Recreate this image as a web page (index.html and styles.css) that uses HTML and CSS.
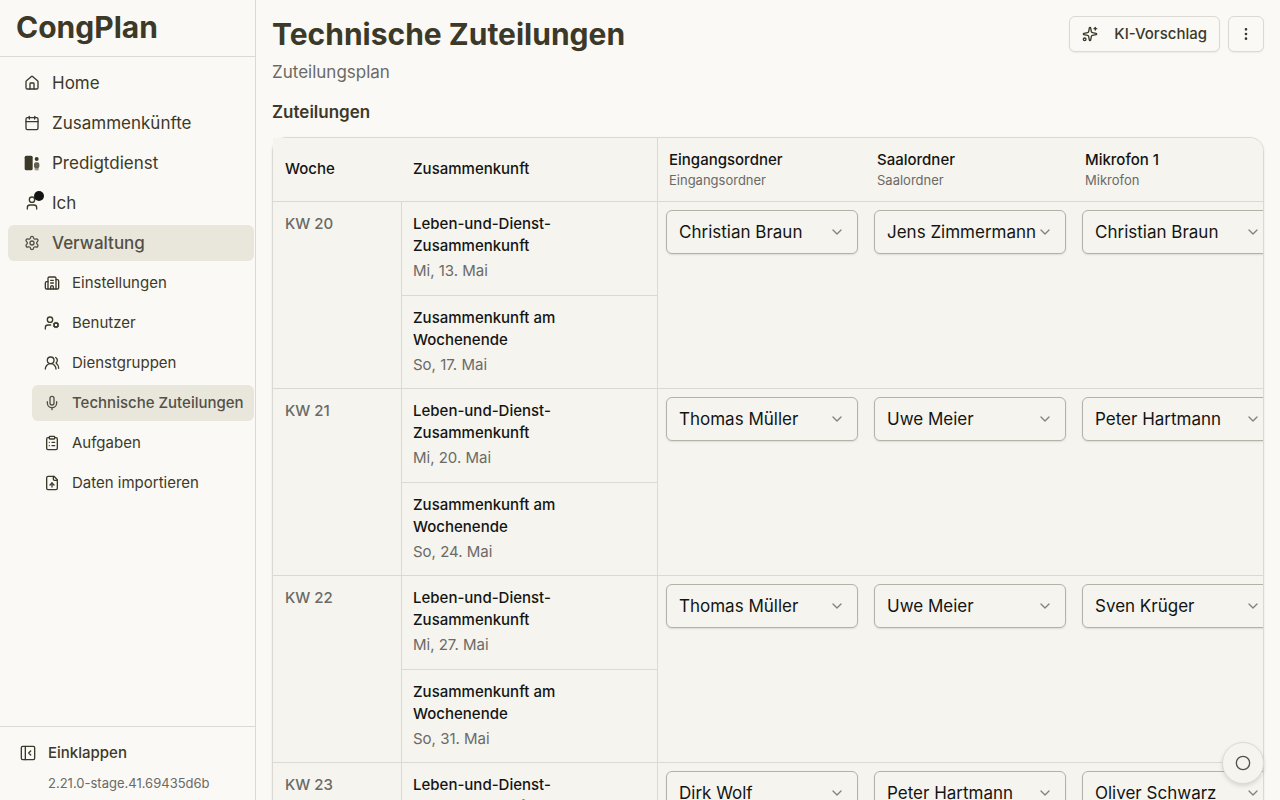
FILE: index.html
```html
<!DOCTYPE html>
<html lang="de">
<head>
    <meta charset="UTF-8">
    <meta name="viewport" content="width=device-width, initial-scale=1.0">
    <title>Technische Zuteilungen - CongPlan</title>
    <link rel="stylesheet" href="styles.css">
</head>
<body>
    <div class="app">
        <aside class="sidebar">
            <div class="brand">CongPlan</div>
            <nav class="nav">
                <a class="nav-link" href="#">
                    <svg class="icon" viewBox="0 0 24 24"><path d="M15 21v-8a1 1 0 0 0-1-1h-4a1 1 0 0 0-1 1v8"/><path d="M3 10a2 2 0 0 1 .709-1.528l7-6a2 2 0 0 1 2.582 0l7 6A2 2 0 0 1 21 10v9a2 2 0 0 1-2 2H5a2 2 0 0 1-2-2z"/></svg>
                    Home
                </a>
                <a class="nav-link" href="#">
                    <svg class="icon" viewBox="0 0 24 24"><path d="M8 2v4"/><path d="M16 2v4"/><rect width="18" height="18" x="3" y="4" rx="2"/><path d="M3 10h18"/></svg>
                    Zusammenkünfte
                </a>
                <a class="nav-link" href="#">
                    <svg class="icon icon-solid" viewBox="0 0 24 24"><rect x="1" y="1" width="12" height="22" rx="2.5"/><circle cx="19" cy="6" r="3"/><rect x="15" y="11" width="8" height="9" rx="3" opacity=".8"/><rect x="16" y="19" width="6" height="4" opacity=".5"/></svg>
                    Predigtdienst
                </a>
                <a class="nav-link" href="#">
                    <span class="icon-wrap">
                        <svg class="icon" viewBox="0 0 24 24"><path d="M19 21v-2a4 4 0 0 0-4-4H9a4 4 0 0 0-4 4v2"/><circle cx="12" cy="7" r="4"/></svg>
                        <span class="dot"></span>
                    </span>
                    Ich
                </a>
                <a class="nav-link active" href="#">
                    <svg class="icon" viewBox="0 0 24 24"><path d="M9.671 4.136a2.34 2.34 0 0 1 4.659 0 2.34 2.34 0 0 0 3.319 1.915 2.34 2.34 0 0 1 2.33 4.033 2.34 2.34 0 0 0 0 3.831 2.34 2.34 0 0 1-2.33 4.033 2.34 2.34 0 0 0-3.319 1.915 2.34 2.34 0 0 1-4.659 0 2.34 2.34 0 0 0-3.32-1.915 2.34 2.34 0 0 1-2.33-4.033 2.34 2.34 0 0 0 0-3.831A2.34 2.34 0 0 1 6.35 6.051a2.34 2.34 0 0 0 3.319-1.915"/><circle cx="12" cy="12" r="3"/></svg>
                    Verwaltung
                </a>
                <div class="subnav">
                    <a class="nav-link" href="#">
                        <svg class="icon" viewBox="0 0 24 24"><path d="M10 12h4"/><path d="M10 8h4"/><path d="M14 21v-3a2 2 0 0 0-4 0v3"/><path d="M6 10H4a2 2 0 0 0-2 2v7a2 2 0 0 0 2 2h16a2 2 0 0 0 2-2V9a2 2 0 0 0-2-2h-2"/><path d="M6 21V5a2 2 0 0 1 2-2h8a2 2 0 0 1 2 2v16"/></svg>
                        Einstellungen
                    </a>
                    <a class="nav-link" href="#">
                        <svg class="icon" viewBox="0 0 24 24"><path d="M10 15H6a4 4 0 0 0-4 4v2"/><path d="m14.305 16.53.923-.382"/><path d="m15.228 13.852-.923-.383"/><path d="m16.852 12.228-.383-.923"/><path d="m16.852 17.772-.383.924"/><path d="m19.148 12.228.383-.923"/><path d="m19.53 18.696-.382-.924"/><path d="m20.772 13.852.924-.383"/><path d="m20.772 16.148.924.383"/><circle cx="18" cy="15" r="3"/><circle cx="9" cy="7" r="4"/></svg>
                        Benutzer
                    </a>
                    <a class="nav-link" href="#">
                        <svg class="icon" viewBox="0 0 24 24"><path d="M18 21a8 8 0 0 0-16 0"/><circle cx="10" cy="8" r="5"/><path d="M22 20c0-3.37-2-6.5-4-8a5 5 0 0 0-.45-8.3"/></svg>
                        Dienstgruppen
                    </a>
                    <a class="nav-link active" href="#">
                        <svg class="icon" viewBox="0 0 24 24"><path d="M12 19v3"/><path d="M19 10v2a7 7 0 0 1-14 0v-2"/><rect x="9" y="2" width="6" height="13" rx="3"/></svg>
                        Technische Zuteilungen
                    </a>
                    <a class="nav-link" href="#">
                        <svg class="icon" viewBox="0 0 24 24"><rect width="8" height="4" x="8" y="2" rx="1"/><path d="M16 4h2a2 2 0 0 1 2 2v14a2 2 0 0 1-2 2H6a2 2 0 0 1-2-2V6a2 2 0 0 1 2-2h2"/><path d="M12 11h4"/><path d="M12 16h4"/><path d="M8 11h.01"/><path d="M8 16h.01"/></svg>
                        Aufgaben
                    </a>
                    <a class="nav-link" href="#">
                        <svg class="icon" viewBox="0 0 24 24"><path d="M15 2H6a2 2 0 0 0-2 2v16a2 2 0 0 0 2 2h12a2 2 0 0 0 2-2V7z"/><path d="M14 2v4a2 2 0 0 0 2 2h4"/><path d="M12 12v6"/><path d="m15 15-3-3-3 3"/></svg>
                        Daten importieren
                    </a>
                </div>
            </nav>
            <div class="sidebar-footer">
                <button class="collapse" type="button">
                    <svg class="icon" viewBox="0 0 24 24"><rect width="20" height="20" x="2" y="2" rx="2"/><path d="M8 2v20"/><path d="m16 15-3-3 3-3"/></svg>
                    Einklappen
                </button>
                <div class="version">2.21.0-stage.41.69435d6b</div>
            </div>
        </aside>

        <main class="main">
            <header class="page-header">
                <div>
                    <h1>Technische Zuteilungen</h1>
                    <p class="subtitle">Zuteilungsplan</p>
                </div>
                <div class="actions">
                    <button class="btn" type="button">
                        <svg class="icon" viewBox="0 0 24 24"><path d="M11.017 2.814a1 1 0 0 1 1.966 0l1.051 5.558a2 2 0 0 0 1.594 1.594l5.558 1.051a1 1 0 0 1 0 1.966l-5.558 1.051a2 2 0 0 0-1.594 1.594l-1.051 5.558a1 1 0 0 1-1.966 0l-1.051-5.558a2 2 0 0 0-1.594-1.594l-5.558-1.051a1 1 0 0 1 0-1.966l5.558-1.051a2 2 0 0 0 1.594-1.594z"/><path d="M20 2v4"/><path d="M22 4h-4"/><circle cx="4" cy="20" r="2"/></svg>
                        KI-Vorschlag
                    </button>
                    <button class="btn btn-icon" type="button" aria-label="Mehr">
                        <svg class="icon" viewBox="0 0 24 24"><circle cx="12" cy="12" r="1"/><circle cx="12" cy="5" r="1"/><circle cx="12" cy="19" r="1"/></svg>
                    </button>
                </div>
            </header>

            <h2>Zuteilungen</h2>
            <div class="card">
                <div class="table-scroll">
                    <table>
                        <colgroup>
                            <col class="col-week">
                            <col class="col-meeting">
                            <col class="col-role">
                            <col class="col-role">
                            <col class="col-role">
                        </colgroup>
                        <thead>
                            <tr>
                                <th>Woche</th>
                                <th>Zusammenkunft</th>
                                <th class="role first">Eingangsordner<span>Eingangsordner</span></th>
                                <th class="role">Saalordner<span>Saalordner</span></th>
                                <th class="role">Mikrofon 1<span>Mikrofon</span></th>
                            </tr>
                        </thead>
                        <tbody>
                            <tr>
                                <td class="week" rowspan="2">KW 20</td>
                                <td class="meeting">Leben-und-Dienst-<br>Zusammenkunft<span>Mi, 13. Mai</span></td>
                                <td class="slot first" rowspan="2"><div class="select"><select aria-label="Eingangsordner KW 20"><option>Christian Braun</option></select><svg class="icon" viewBox="0 0 24 24"><path d="m6 9 6 6 6-6"/></svg></div></td>
                                <td class="slot" rowspan="2"><div class="select"><select aria-label="Saalordner KW 20"><option>Jens Zimmermann</option></select><svg class="icon" viewBox="0 0 24 24"><path d="m6 9 6 6 6-6"/></svg></div></td>
                                <td class="slot" rowspan="2"><div class="select"><select aria-label="Mikrofon 1 KW 20"><option>Christian Braun</option></select><svg class="icon" viewBox="0 0 24 24"><path d="m6 9 6 6 6-6"/></svg></div></td>
                            </tr>
                            <tr>
                                <td class="meeting weekend">Zusammenkunft am<br>Wochenende<span>So, 17. Mai</span></td>
                            </tr>
                            <tr>
                                <td class="week" rowspan="2">KW 21</td>
                                <td class="meeting">Leben-und-Dienst-<br>Zusammenkunft<span>Mi, 20. Mai</span></td>
                                <td class="slot first" rowspan="2"><div class="select"><select aria-label="Eingangsordner KW 21"><option>Thomas Müller</option></select><svg class="icon" viewBox="0 0 24 24"><path d="m6 9 6 6 6-6"/></svg></div></td>
                                <td class="slot" rowspan="2"><div class="select"><select aria-label="Saalordner KW 21"><option>Uwe Meier</option></select><svg class="icon" viewBox="0 0 24 24"><path d="m6 9 6 6 6-6"/></svg></div></td>
                                <td class="slot" rowspan="2"><div class="select"><select aria-label="Mikrofon 1 KW 21"><option>Peter Hartmann</option></select><svg class="icon" viewBox="0 0 24 24"><path d="m6 9 6 6 6-6"/></svg></div></td>
                            </tr>
                            <tr>
                                <td class="meeting weekend">Zusammenkunft am<br>Wochenende<span>So, 24. Mai</span></td>
                            </tr>
                            <tr>
                                <td class="week" rowspan="2">KW 22</td>
                                <td class="meeting">Leben-und-Dienst-<br>Zusammenkunft<span>Mi, 27. Mai</span></td>
                                <td class="slot first" rowspan="2"><div class="select"><select aria-label="Eingangsordner KW 22"><option>Thomas Müller</option></select><svg class="icon" viewBox="0 0 24 24"><path d="m6 9 6 6 6-6"/></svg></div></td>
                                <td class="slot" rowspan="2"><div class="select"><select aria-label="Saalordner KW 22"><option>Uwe Meier</option></select><svg class="icon" viewBox="0 0 24 24"><path d="m6 9 6 6 6-6"/></svg></div></td>
                                <td class="slot" rowspan="2"><div class="select"><select aria-label="Mikrofon 1 KW 22"><option>Sven Krüger</option></select><svg class="icon" viewBox="0 0 24 24"><path d="m6 9 6 6 6-6"/></svg></div></td>
                            </tr>
                            <tr>
                                <td class="meeting weekend">Zusammenkunft am<br>Wochenende<span>So, 31. Mai</span></td>
                            </tr>
                            <tr>
                                <td class="week">KW 23</td>
                                <td class="meeting">Leben-und-Dienst-<br>Zusammenkunft</td>
                                <td class="slot first"><div class="select"><select aria-label="Eingangsordner KW 23"><option>Dirk Wolf</option></select><svg class="icon" viewBox="0 0 24 24"><path d="m6 9 6 6 6-6"/></svg></div></td>
                                <td class="slot"><div class="select"><select aria-label="Saalordner KW 23"><option>Peter Hartmann</option></select><svg class="icon" viewBox="0 0 24 24"><path d="m6 9 6 6 6-6"/></svg></div></td>
                                <td class="slot"><div class="select"><select aria-label="Mikrofon 1 KW 23"><option>Oliver Schwarz</option></select><svg class="icon" viewBox="0 0 24 24"><path d="m6 9 6 6 6-6"/></svg></div></td>
                            </tr>
                        </tbody>
                    </table>
                </div>
            </div>
        </main>
    </div>

    <button class="fab" type="button" aria-label="Hilfe">
        <svg class="icon" viewBox="0 0 24 24"><circle cx="12" cy="12" r="10"/></svg>
    </button>
</body>
</html>
```

FILE: styles.css
```css
* {
    box-sizing: border-box;
}
body {
    margin: 0;
    font-family: Inter, 'Liberation Sans', sans-serif;
    font-size: 17px;
    line-height: 24px;
    background-color: #faf9f5;
    color: #3d3929;
}
button, select {
    font: inherit;
    color: inherit;
    cursor: pointer;
}
.icon {
    display: block;
    flex: none;
    width: 16px;
    height: 16px;
    fill: none;
    stroke: currentColor;
    stroke-width: 2;
    stroke-linecap: round;
    stroke-linejoin: round;
}
.icon-solid {
    fill: currentColor;
    stroke: none;
}
.app {
    display: flex;
    height: 100vh;
    overflow: hidden;
}

/* Sidebar */
.sidebar {
    flex: none;
    display: flex;
    flex-direction: column;
    width: 256px;
    border-right: 1px solid #dad9d4;
}
.brand {
    height: 57px;
    padding: 9px 16px;
    border-bottom: 1px solid #dad9d4;
    font-size: 30px;
    line-height: 36px;
    font-weight: 700;
}
.nav {
    flex: 1;
    display: flex;
    flex-direction: column;
    gap: 4px;
    padding: 8px 1px 8px 8px;
}
.nav-link {
    display: flex;
    align-items: center;
    gap: 12px;
    height: 36px;
    padding: 0 12px 0 16px;
    border-radius: 6px;
    color: inherit;
    text-decoration: none;
    white-space: nowrap;
}
.nav-link.active {
    background-color: #e9e6dc;
    color: #535146;
    font-weight: 500;
}
.icon-wrap {
    position: relative;
}
.dot {
    position: absolute;
    top: -4px;
    right: -4px;
    width: 10px;
    height: 10px;
    border-radius: 50%;
    background-color: #141413;
}
.subnav {
    display: flex;
    flex-direction: column;
    gap: 4px;
    padding-left: 24px;
    font-size: 15px;
}
.subnav .nav-link {
    padding-left: 12px;
}
.sidebar-footer {
    padding: 12px 20px 5px;
    border-top: 1px solid #dad9d4;
}
.collapse {
    display: flex;
    align-items: center;
    gap: 12px;
    padding: 0;
    border: none;
    background: none;
    font-size: 15px;
    font-weight: 500;
    line-height: 28px;
}
.version {
    margin-top: 4px;
    padding-left: 28px;
    font-size: 13px;
    color: #6b6a66;
}

/* Page */
.main {
    flex: 1;
    min-width: 0;
    padding: 16px;
}
.page-header {
    display: flex;
    justify-content: space-between;
    align-items: flex-start;
}
h1 {
    margin: 0;
    font-size: 30px;
    line-height: 36px;
    font-weight: 700;
}
.subtitle {
    margin: 8px 0 0;
    color: #6b6a66;
}
.actions {
    display: flex;
    gap: 8px;
}
.btn {
    display: flex;
    align-items: center;
    gap: 16px;
    height: 36px;
    padding: 0 12px;
    border: 1px solid #dad9d4;
    border-radius: 6px;
    background-color: #faf9f5;
    box-shadow: 0 1px 2px rgba(0, 0, 0, 0.06);
    font-size: 15px;
    font-weight: 500;
}
.btn-icon {
    width: 36px;
    padding: 0 9px;
}
h2 {
    margin: 16px 0 13px;
    font-size: 17px;
    line-height: 24px;
    font-weight: 600;
}
.card {
    border: 1px solid #dad9d4;
    border-radius: 14px;
    background-color: #f5f4ef;
    box-shadow: 0 1px 3px rgba(0, 0, 0, 0.08);
}
.table-scroll {
    overflow: hidden;
    border-radius: 0 13px 13px 0;
}
table {
    width: 1008px;
    table-layout: fixed;
    border-collapse: separate;
    border-spacing: 0;
    font-size: 15px;
    line-height: 22px;
    color: #141413;
}
.col-week {
    width: 128px;
}
.col-meeting {
    width: 256px;
}
.col-role {
    width: 208px;
}
th, td {
    border-bottom: 1px solid #dad9d4;
    background-color: #f5f4ef;
    text-align: left;
    font-weight: 500;
}
th {
    height: 64px;
    padding: 0 12px 2px;
}
th span, td span {
    display: block;
    font-weight: 400;
    color: #6b6a66;
}
th span {
    font-size: 13px;
    line-height: 18px;
}
td {
    padding: 11px 12px;
    vertical-align: top;
}
td span {
    margin-top: 3px;
}
.week {
    color: #6b6a66;
}
.meeting {
    padding: 11px 11px 13px;
    border-left: 1px solid #dad9d4;
}
.weekend {
    padding-bottom: 12px;
}
.slot {
    padding: 8px 7px 8px 9px;
}
th.first {
    padding-left: 11px;
    border-left: 1px solid #dad9d4;
}
.slot.first {
    padding-left: 8px;
    border-left: 1px solid #dad9d4;
}
.select {
    position: relative;
    height: 44px;
}
.select select {
    appearance: none;
    width: 100%;
    height: 44px;
    padding: 0 28px 0 12px;
    border: 1px solid #b4b2a7;
    border-radius: 6px;
    background-color: #f5f4ef;
    box-shadow: 0 1px 2px rgba(0, 0, 0, 0.1);
    font-size: 17px;
    font-weight: 400;
}
.select .icon {
    position: absolute;
    top: 14px;
    right: 13px;
    color: #83827d;
    pointer-events: none;
}
.fab {
    position: fixed;
    right: 16px;
    bottom: 16px;
    display: flex;
    align-items: center;
    justify-content: center;
    width: 42px;
    height: 42px;
    padding: 0;
    border: 1px solid #dad9d4;
    border-radius: 50%;
    background-color: #f5f4ef;
    color: #535146;
    box-shadow: 0 2px 4px rgba(0, 0, 0, 0.12);
}
```
